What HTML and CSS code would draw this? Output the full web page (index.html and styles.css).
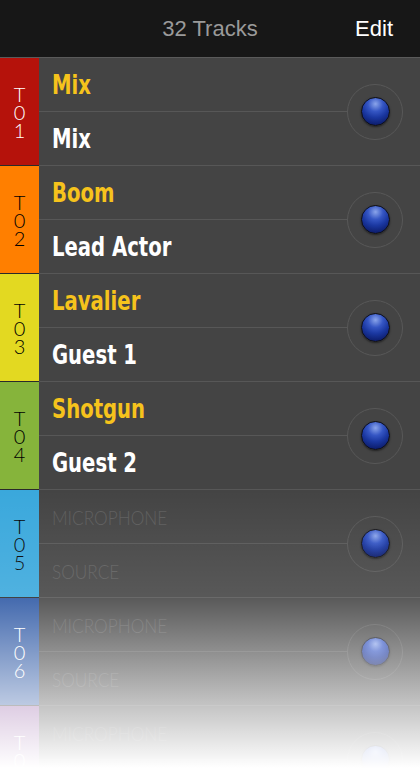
FILE: index.html
```html
<!DOCTYPE html>
<html lang="en">
<head>
  <meta charset="UTF-8" />
  <meta name="viewport" content="width=device-width, initial-scale=1.0"/>
  <title>Tracks</title>
  <link rel="stylesheet" href="styles.css">
</head>
<body>
  <div class="screen">
    <header class="nav">
      <span class="nav-title">32 Tracks</span>
      <a href="#" class="nav-edit">Edit</a>
    </header>

    <ul class="tracks">
      <li class="track">
        <div class="tag t01"><span>T</span><span>0</span><span>1</span></div>
        <div class="body">
          <div class="names">
            <div class="name mic"><span>Mix</span></div>
            <div class="name src"><span>Mix</span></div>
          </div>
          <div class="arm"><div class="ring"><div class="ball"></div></div></div>
        </div>
      </li>
      <li class="track">
        <div class="tag t02"><span>T</span><span>0</span><span>2</span></div>
        <div class="body">
          <div class="names">
            <div class="name mic"><span>Boom</span></div>
            <div class="name src"><span>Lead Actor</span></div>
          </div>
          <div class="arm"><div class="ring"><div class="ball"></div></div></div>
        </div>
      </li>
      <li class="track">
        <div class="tag t03"><span>T</span><span>0</span><span>3</span></div>
        <div class="body">
          <div class="names">
            <div class="name mic"><span>Lavalier</span></div>
            <div class="name src"><span>Guest 1</span></div>
          </div>
          <div class="arm"><div class="ring"><div class="ball"></div></div></div>
        </div>
      </li>
      <li class="track">
        <div class="tag t04"><span>T</span><span>0</span><span>4</span></div>
        <div class="body">
          <div class="names">
            <div class="name mic"><span>Shotgun</span></div>
            <div class="name src"><span>Guest 2</span></div>
          </div>
          <div class="arm"><div class="ring"><div class="ball"></div></div></div>
        </div>
      </li>
      <li class="track">
        <div class="tag t05"><span>T</span><span>0</span><span>5</span></div>
        <div class="body">
          <div class="names">
            <div class="name empty"><span>MICROPHONE</span></div>
            <div class="name empty"><span>SOURCE</span></div>
          </div>
          <div class="arm"><div class="ring"><div class="ball"></div></div></div>
        </div>
      </li>
      <li class="track">
        <div class="tag t06"><span>T</span><span>0</span><span>6</span></div>
        <div class="body">
          <div class="names">
            <div class="name empty"><span>MICROPHONE</span></div>
            <div class="name empty"><span>SOURCE</span></div>
          </div>
          <div class="arm"><div class="ring"><div class="ball"></div></div></div>
        </div>
      </li>
      <li class="track">
        <div class="tag t07"><span>T</span><span>0</span><span>7</span></div>
        <div class="body">
          <div class="names">
            <div class="name empty"><span>MICROPHONE</span></div>
            <div class="name empty"><span>SOURCE</span></div>
          </div>
          <div class="arm"><div class="ring"><div class="ball"></div></div></div>
        </div>
      </li>
    </ul>

    <!-- white fade over the bottom of the list -->
    <div class="fade"></div>
  </div>
</body>
</html>
```

FILE: styles.css
```css
body {
  margin: 0;
  padding: 0;
  background: #fff;
  font-family: 'Liberation Sans', Arial, sans-serif;
}

.screen {
  position: relative;
  width: 420px;
  height: 777px;
  overflow: hidden;
  background: #444;
}

.nav {
  height: 57px;
  background: #171717;
  border-bottom: 1px solid #5a5a5a;
  display: flex;
  align-items: center;
  justify-content: center;
  position: relative;
}

.nav-title {
  color: #9a9a9a;
  font-size: 22px;
}

.nav-edit {
  position: absolute;
  right: 27px;
  color: #fff;
  font-size: 22px;
  text-decoration: none;
}

.tracks {
  list-style: none;
  margin: 0;
  padding: 0;
}

.track {
  display: flex;
  height: 108px;
}

.tag {
  width: 39px;
  border-bottom: 1px solid #2a2a2a;
  display: flex;
  flex-direction: column;
  align-items: center;
  justify-content: center;
  font-family: Lato, 'Liberation Sans', sans-serif;
  font-weight: 300;
  font-size: 20px;
  color: #000;
}

.tag span {
  height: 18px;
  line-height: 18px;
}

.t01 { background: #b5120b; color: #fff; }
.t02 { background: #ff7f00; }
.t03 { background: #e3d921; }
.t04 { background: #86b43b; }
.t05 { background: #3aa8dc; }
.t06 { background: #2c57a4; color: #fff; }
.t07 { background: #9660a6; color: #fff; }

.body {
  flex: 1;
  display: flex;
  align-items: center;
  border-bottom: 1px solid #575757;
}

.names {
  flex: 1;
  align-self: stretch;
  display: flex;
  flex-direction: column;
}

.name {
  flex: 1;
  display: flex;
  align-items: center;
  padding-left: 13px;
  font-family: 'DejaVu Sans Condensed', 'DejaVu Sans', sans-serif;
  font-stretch: condensed;
  font-size: 26px;
  font-weight: bold;
}

.name span {
  display: inline-block;
  white-space: nowrap;
  transform: scaleX(0.84);
  transform-origin: 0 50%;
}

.name:first-child {
  border-bottom: 1px solid #575757;
}

.mic { color: #f6c31c; }
.src { color: #fff; }

.name.empty {
  font-family: Lato, 'Liberation Sans', sans-serif;
  font-stretch: normal;
  font-weight: 300;
  font-size: 20px;
  color: #5c5c5c;
}

.name.empty span {
  transform: scaleX(0.86);
}

.arm {
  width: 73px;
}

.ring {
  width: 56px;
  height: 56px;
  box-sizing: border-box;
  border: 1px solid #585858;
  border-radius: 50%;
  display: flex;
  align-items: center;
  justify-content: center;
}

.ball {
  width: 29px;
  height: 29px;
  box-sizing: border-box;
  border-radius: 50%;
  border: 1.5px solid #0e0e14;
  background: radial-gradient(circle at 50% 22%, #8aa4ea 0%, #3556c4 30%, #1a37a0 55%, #0c1c6a 85%, #081250 100%);
  box-shadow: 0 1px 2px rgba(0, 0, 0, 0.5);
}

.fade {
  position: absolute;
  left: 0;
  top: 0;
  width: 100%;
  height: 100%;
  pointer-events: none;
  background: linear-gradient(to bottom,
    rgba(255, 255, 255, 0) 490px,
    rgba(255, 255, 255, 0.11) 597px,
    rgba(255, 255, 255, 0.66) 700px,
    #fff 768px);
}
```
